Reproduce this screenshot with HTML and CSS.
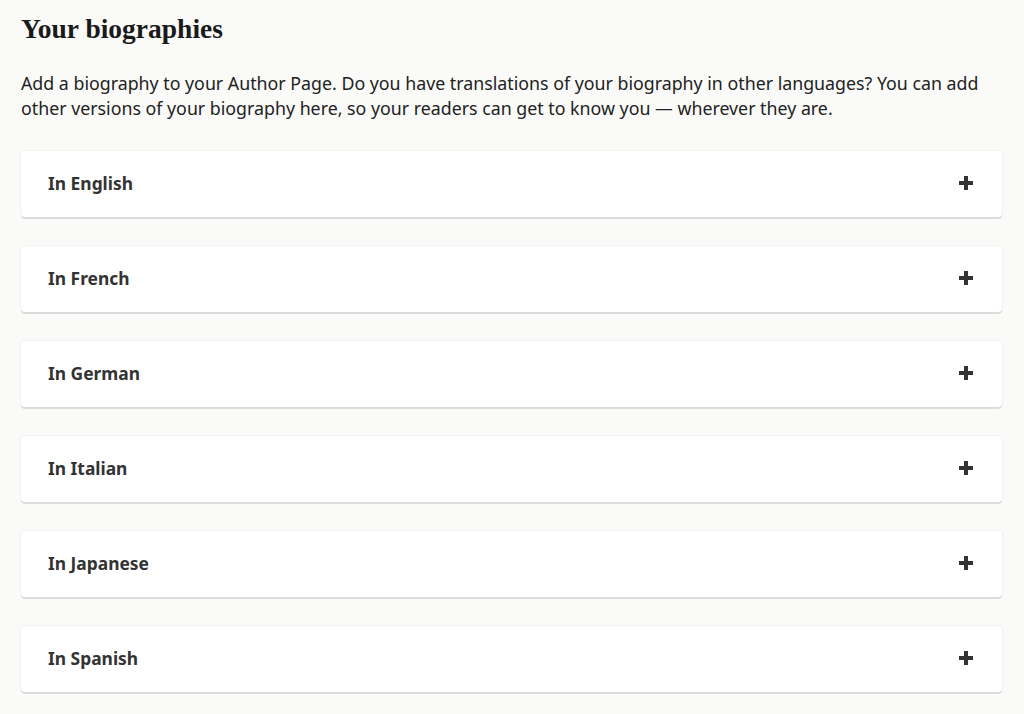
FILE: index.html
```html
<!DOCTYPE html>
<html lang="en">
<head>
<meta charset="utf-8">
<title>Your biographies</title>
<link rel="stylesheet" href="styles.css">
</head>
<body>
<main class="page">
  <h1 class="title">Your biographies</h1>
  <p class="intro">Add a biography to your Author Page. Do you have translations of your biography in other languages? You can add other versions of your biography here, so your readers can get to know you — wherever they are.</p>
  <ul class="list">
    <li class="card"><span class="label">In English</span><svg class="plus" viewBox="0 0 16 16"><path d="M8 1v14M1 8h14"/></svg></li>
    <li class="card"><span class="label">In French</span><svg class="plus" viewBox="0 0 16 16"><path d="M8 1v14M1 8h14"/></svg></li>
    <li class="card"><span class="label">In German</span><svg class="plus" viewBox="0 0 16 16"><path d="M8 1v14M1 8h14"/></svg></li>
    <li class="card"><span class="label">In Italian</span><svg class="plus" viewBox="0 0 16 16"><path d="M8 1v14M1 8h14"/></svg></li>
    <li class="card"><span class="label">In Japanese</span><svg class="plus" viewBox="0 0 16 16"><path d="M8 1v14M1 8h14"/></svg></li>
    <li class="card"><span class="label">In Spanish</span><svg class="plus" viewBox="0 0 16 16"><path d="M8 1v14M1 8h14"/></svg></li>
  </ul>
</main>
</body>
</html>
```

FILE: styles.css
```css
html, body {
  margin: 0;
  padding: 0;
  background: #fafaf8;
}
body {
  font-family: "Noto Sans", "Open Sans", Arial, sans-serif;
  color: #232f2f;
}
.page {
  padding: 12px 22px 24px 21px;
}
.title {
  margin: 0;
  font-family: "Liberation Serif", "Times New Roman", serif;
  font-weight: 700;
  font-size: 27.5px;
  line-height: 34px;
  color: #1a1a1a;
}
.intro {
  margin: 25px 0 0 0;
  font-size: 17.8px;
  line-height: 25px;
  color: #222;
}
.list {
  list-style: none;
  margin: 30px 0 0 0;
  padding: 0;
  display: flex;
  flex-direction: column;
  gap: 29px;
}
.card {
  box-sizing: border-box;
  height: 66px;
  background: #fff;
  border-radius: 4px;
  box-shadow: 0 2px 0 #dcdcdc, 0 0 2px rgba(0,0,0,0.12);
  display: flex;
  align-items: center;
  justify-content: space-between;
  padding: 0 28px 2px 27px;
}
.label {
  font-weight: 700;
  font-size: 17.4px;
  color: #333;
}
.plus {
  width: 16px;
  height: 16px;
  stroke: #333;
  stroke-width: 4;
  fill: none;
}
```
